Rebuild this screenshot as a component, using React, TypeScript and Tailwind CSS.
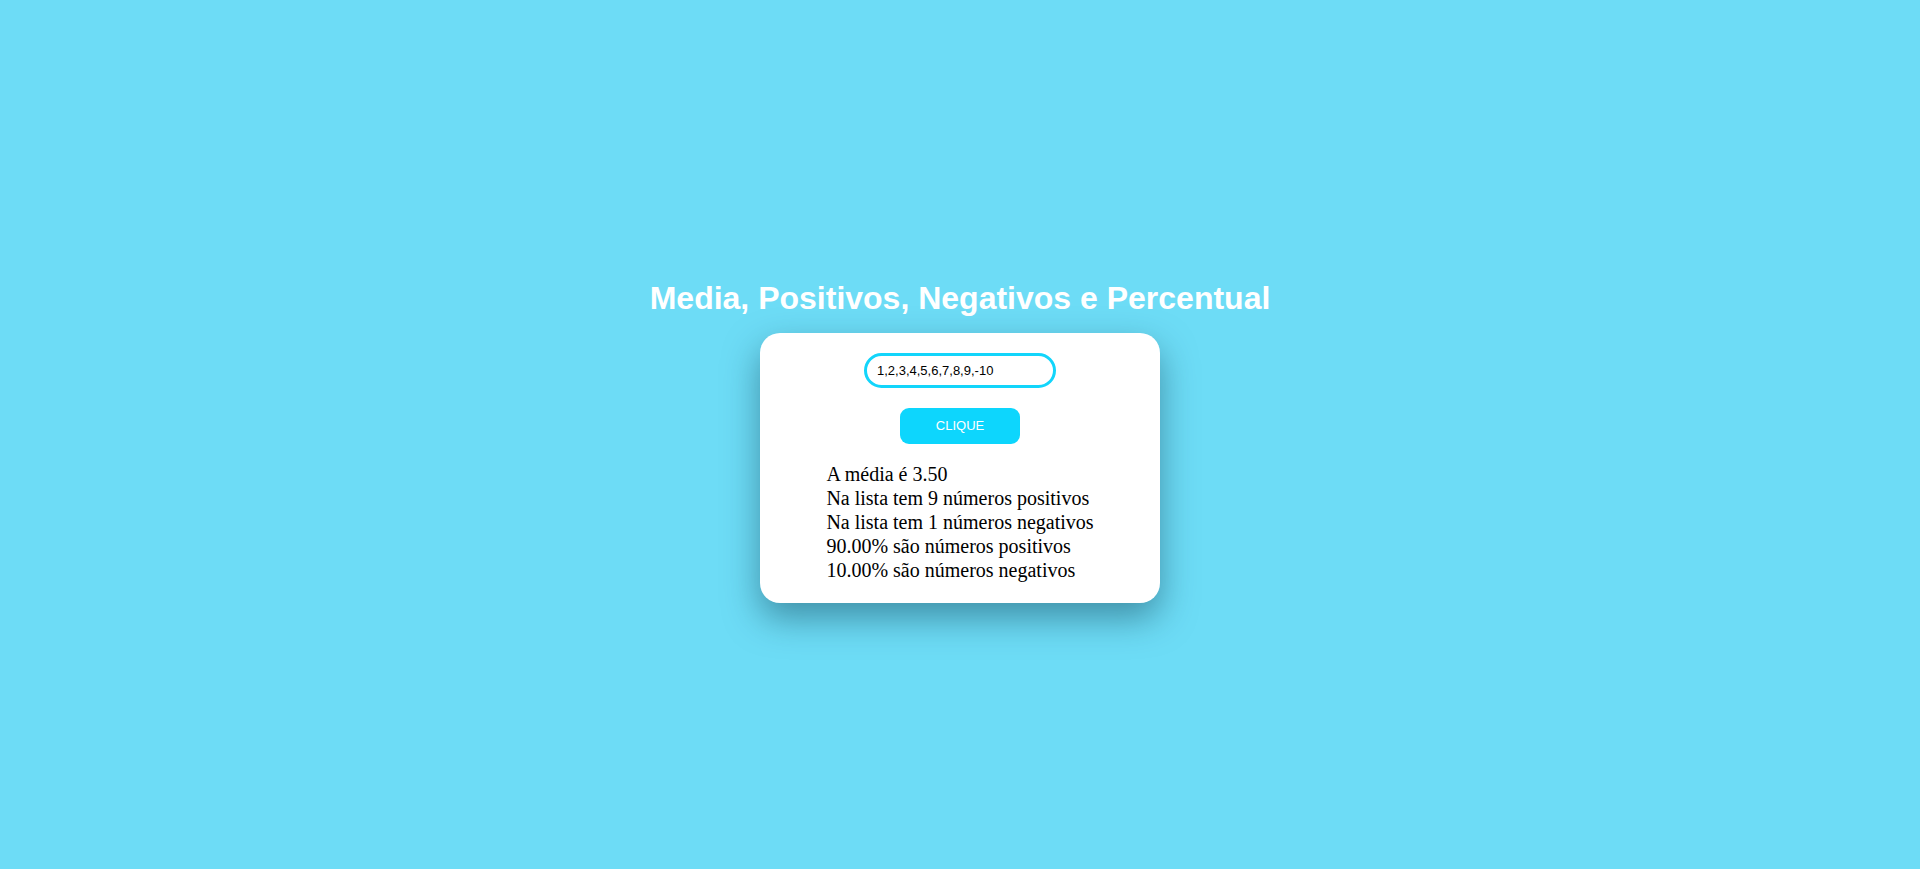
import { useState } from 'react';

function App() {
  const [value, setValue] = useState('1,2,3,4,5,6,7,8,9,-10');

  const nums = value
    .split(',')
    .map((n) => Number(n.trim()))
    .filter((n) => !Number.isNaN(n));
  const total = nums.reduce((a, b) => a + b, 0);
  const positives = nums.filter((n) => n > 0).length;
  const negatives = nums.filter((n) => n < 0).length;
  const count = nums.length || 1;

  return (
    <div className="flex min-h-screen flex-col items-center justify-center bg-[#6ddcf6] pt-3.5 font-['Liberation_Sans',Arial,sans-serif]">
      {/* Title */}
      <h1 className="mb-4 text-[32px] leading-[37px] font-bold text-white">
        Media, Positivos, Negativos e Percentual
      </h1>

      {/* Card */}
      <div className="flex w-[400px] flex-col items-center rounded-[20px] bg-white pt-5 pb-[21px] shadow-[0_15px_35px_rgba(20,70,90,0.5)]">
        <input
          type="text"
          value={value}
          onChange={(e) => setValue(e.target.value)}
          className="h-[35px] w-[192px] rounded-full border-[3px] border-[#12d5fb] px-[10px] text-[13px] text-black focus:outline-none"
        />

        <button className="mt-5 h-9 w-[120px] rounded-[9px] bg-[#0dd6fd] text-[13px] text-white">
          CLIQUE
        </button>

        <div className="mt-[18px] text-left font-['Liberation_Serif','Times_New_Roman',serif] text-[20px] leading-[24px] text-black">
          <p>A média é {(total / count).toFixed(2)}</p>
          <p>Na lista tem {positives} números positivos</p>
          <p>Na lista tem {negatives} números negativos</p>
          <p>{((positives / count) * 100).toFixed(2)}% são números positivos</p>
          <p>{((negatives / count) * 100).toFixed(2)}% são números negativos</p>
        </div>
      </div>
    </div>
  );
}

export default App;
